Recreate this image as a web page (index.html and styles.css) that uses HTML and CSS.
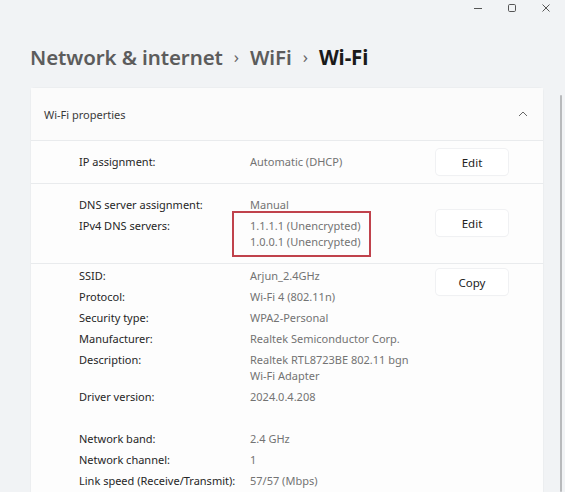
FILE: index.html
```html
<!DOCTYPE html>
<html>
<head>
<meta charset="utf-8">
<link rel="stylesheet" href="styles.css">
</head>
<body>
<div class="window">
  <div class="titlebar">
    <span class="tb-btn"><svg width="10" height="10" viewBox="0 0 10 10"><path d="M1 5.5h8" stroke="#555" stroke-width="1"/></svg></span>
    <span class="tb-btn"><svg width="10" height="10" viewBox="0 0 10 10"><rect x="1.5" y="1.5" width="7" height="7" rx="1.2" fill="none" stroke="#555" stroke-width="1"/></svg></span>
    <span class="tb-btn"><svg width="10" height="10" viewBox="0 0 10 10"><path d="M1.5 1.5l7 7M8.5 1.5l-7 7" stroke="#555" stroke-width="1"/></svg></span>
  </div>
  <div class="main">
    <h1 class="breadcrumb">
      <span class="crumb">Network &amp; internet</span>
      <span class="sep">›</span>
      <span class="crumb">WiFi</span>
      <span class="sep">›</span>
      <span class="crumb current">Wi-Fi</span>
    </h1>
    <div class="card">
      <div class="card-header">
        <span>Wi-Fi properties</span>
        <svg class="chev" width="10" height="6" viewBox="0 0 10 6"><path d="M1 5l4-4 4 4" fill="none" stroke="#666" stroke-width="1"/></svg>
      </div>
      <div class="section single">
        <div class="labels"><div>IP assignment:</div></div>
        <div class="values"><div>Automatic (DHCP)</div></div>
        <button class="btn">Edit</button>
      </div>
      <div class="section dns">
        <div class="labels">
          <div>DNS server assignment:</div>
          <div>IPv4 DNS servers:</div>
        </div>
        <div class="values">
          <div>Manual</div>
          <div class="highlight">1.1.1.1 (Unencrypted)<br>1.0.0.1 (Unencrypted)</div>
        </div>
        <button class="btn mid">Edit</button>
      </div>
      <div class="section info">
        <div class="labels">
          <div>SSID:</div>
          <div>Protocol:</div>
          <div>Security type:</div>
          <div>Manufacturer:</div>
          <div class="two">Description:</div>
          <div>Driver version:</div>
          <div class="blank"></div>
          <div>Network band:</div>
          <div>Network channel:</div>
          <div>Link speed (Receive/Transmit):</div>
        </div>
        <div class="values">
          <div>Arjun_2.4GHz</div>
          <div>Wi-Fi 4 (802.11n)</div>
          <div>WPA2-Personal</div>
          <div>Realtek Semiconductor Corp.</div>
          <div class="two">Realtek RTL8723BE 802.11 bgn<br>Wi-Fi Adapter</div>
          <div>2024.0.4.208</div>
          <div class="blank"></div>
          <div>2.4 GHz</div>
          <div>1</div>
          <div>57/57 (Mbps)</div>
        </div>
        <button class="btn top">Copy</button>
      </div>
    </div>
  </div>
  <div class="scrollbar"></div>
</div>
</body>
</html>
```

FILE: styles.css
```css
html, body {
  margin: 0;
  padding: 0;
}
body {
  background: #f1f3f5;
  font-family: "Noto Sans", "Open Sans", sans-serif;
  color: #1b1b1b;
  width: 565px;
  height: 492px;
  overflow: hidden;
}
.window {
  position: relative;
  height: 492px;
}
.titlebar {
  height: 16px;
  display: flex;
  justify-content: flex-end;
  align-items: center;
  gap: 24px;
  padding: 0 14px 0 0;
}
.tb-btn {
  width: 10px;
  height: 10px;
  display: flex;
}
.main {
  padding: 0 22px 0 31px;
}
.breadcrumb {
  margin: 25px 0 0 -1px;
  height: 47px;
  font-size: 20.5px;
  font-weight: 600;
  line-height: 32px;
  display: flex;
  gap: 11px;
  color: #5c5c5c;
  letter-spacing: -0.1px;
}
.breadcrumb .sep {
  font-weight: 400;
  font-size: 17px;
  color: #666;
}
.breadcrumb .current {
  color: #1a1a1a;
  font-weight: 700;
}
.card {
  background: #fdfdfd;
  border-radius: 4px;
  box-shadow: 0 0 0 1px #eceef0;
}
.card-header {
  height: 52px;
  display: flex;
  align-items: center;
  justify-content: space-between;
  padding: 0 15px 0 13px;
  font-size: 11px;
  color: #3a3a3a;
  background: #fbfbfb;
}
.section {
  border-top: 1px solid #e9ebed;
  display: grid;
  grid-template-columns: 171px 1fr 72px;
  padding: 0 35px 0 48px;
  font-size: 11px;
  line-height: 16px;
}
.labels, .values {
  display: flex;
  flex-direction: column;
  gap: 5px;
}
.labels { color: #262626; }
.values { color: #737373; }
.section.single {
  height: 42px;
  align-items: center;
}
.section.dns {
  padding-top: 13px;
  padding-bottom: 13px;
  align-items: start;
}
.section.info {
  padding-top: 4px;
  padding-bottom: 20px;
  align-items: start;
}
.two { height: 32px; }
.blank { height: 16px; }
.highlight {
  outline: 2px solid #c0424c;
  outline-offset: -1px;
  margin: -6px 0 -6px -17px;
  padding: 6px 10px 6px 17px;
  width: max-content;
}
.btn {
  width: 72px;
  height: 26px;
  border: none;
  border-radius: 4px;
  background: #ffffff;
  box-shadow: 0 0 0 1px #f0f1f3, 0 1px 1px rgba(0,0,0,0.05);
  font-family: inherit;
  font-size: 11.5px;
  color: #222;
  padding: 0;
}
.btn.mid {
  align-self: start;
  margin-top: 13px;
}
.btn.top {
  align-self: start;
  margin-top: 1px;
}
.scrollbar {
  position: absolute;
  right: 3px;
  top: 95px;
  bottom: 0;
  width: 2px;
  background: #b8babc;
  border-radius: 1px;
}
```
